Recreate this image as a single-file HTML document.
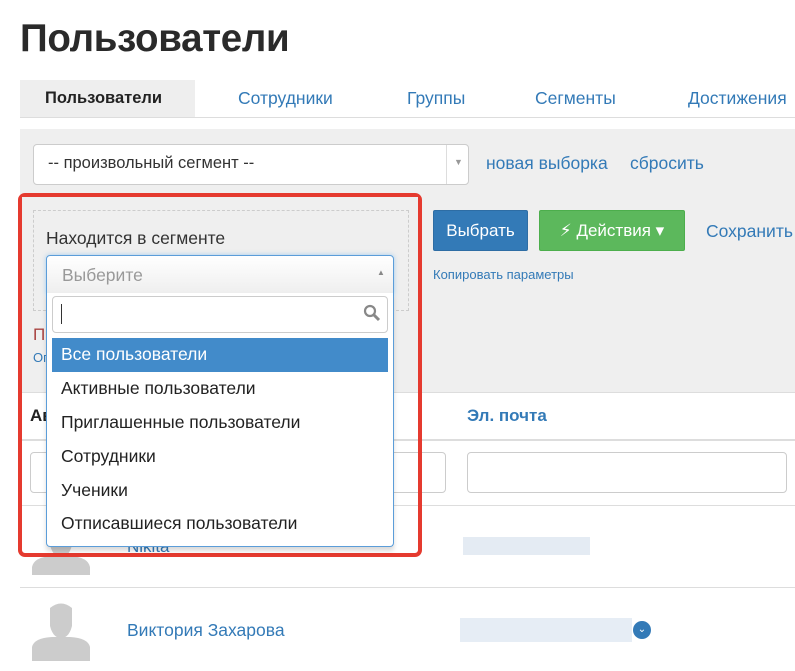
<!DOCTYPE html>
<html><head><meta charset="utf-8"><style>
*{box-sizing:border-box;margin:0;padding:0}
body{width:795px;height:671px;overflow:hidden;background:#fff;font-family:"Liberation Sans","DejaVu Sans",sans-serif;color:#333;position:relative}
.a{position:absolute}
.blue{color:#337ab7}
</style></head><body>
<div class="a" style="left:20px;top:17px;font-size:38.5px;font-weight:bold;color:#2a2a2a;letter-spacing:-0.3px">Пользователи</div>
<div class="a" style="left:20px;top:80px;width:175px;height:38px;background:#eee"></div>
<div class="a" style="left:20px;top:117px;width:775px;height:1px;background:#ddd"></div>
<div class="a" style="left:45px;top:89px;font-size:16.5px;font-weight:bold;color:#222">Пользователи</div>
<div class="a blue" style="left:238px;top:88px;font-size:17.5px">Сотрудники</div>
<div class="a blue" style="left:407px;top:88px;font-size:17.5px">Группы</div>
<div class="a blue" style="left:535px;top:88px;font-size:17.5px">Сегменты</div>
<div class="a blue" style="left:688px;top:88px;font-size:17.5px">Достижения</div>

<div class="a" style="left:20px;top:129px;width:775px;height:263px;background:#efefef"></div>
<div class="a" style="left:33px;top:144px;width:436px;height:41px;background:#fff;border:1px solid #ccc;border-radius:4px"></div>
<div class="a" style="left:446px;top:145px;width:1px;height:39px;background:#ddd"></div>
<div class="a" style="left:454px;top:157px;font-size:9px;color:#999">▼</div>
<div class="a" style="left:48px;top:154px;font-size:16.5px;color:#333">-- произвольный сегмент --</div>
<div class="a blue" style="left:486px;top:153px;font-size:17.5px">новая выборка</div>
<div class="a blue" style="left:630px;top:153px;font-size:17.5px">сбросить</div>

<div class="a" style="left:433px;top:210px;width:95px;height:41px;background:#337ab7;border:1px solid #2e6da4;border-radius:2px;color:#fff;font-size:17px;text-align:center;line-height:40px">Выбрать</div>
<div class="a" style="left:539px;top:210px;width:146px;height:41px;background:#5cb85c;border:1px solid #4cae4c;border-radius:2px;color:#fff;font-size:17px;text-align:center;line-height:40px">⚡ Действия ▾</div>
<div class="a blue" style="left:706px;top:221px;font-size:17.5px">Сохранить</div>
<div class="a blue" style="left:433px;top:267px;font-size:13px">Копировать параметры</div>

<div class="a" style="left:20px;top:392px;width:775px;height:1px;background:#ddd"></div>
<div class="a" style="left:30px;top:406px;font-size:17px;font-weight:bold;color:#222">Ав</div>
<div class="a blue" style="left:467px;top:406px;font-size:17px;font-weight:bold">Эл. почта</div>
<div class="a" style="left:20px;top:439px;width:775px;height:2px;background:#ddd"></div>
<div class="a" style="left:30px;top:452px;width:416px;height:41px;border:1px solid #ccc;border-radius:4px"></div>
<div class="a" style="left:467px;top:452px;width:320px;height:41px;border:1px solid #ccc;border-radius:4px"></div>
<div class="a" style="left:20px;top:505px;width:775px;height:1px;background:#ddd"></div>

<svg class="a" style="left:30px;top:505px" width="62" height="90"><path d="M20 20 q11-6 22 0 v20 q-3 12 -11 12 q-8 0 -11 -12z M2 70 v-8 q2-10 20-11 h18 q18 1 20 11 v8z" fill="#ccc"/></svg>
<div class="a blue" style="left:127px;top:537px;font-size:17px">Nikita</div>
<div class="a" style="left:463px;top:537px;width:127px;height:18px;background:#e4ebf3"></div>
<div class="a" style="left:20px;top:587px;width:775px;height:1px;background:#ddd"></div>
<svg class="a" style="left:30px;top:598px" width="62" height="64"><path d="M20 10 q11-9 22 0 v18 q-3 12 -11 12 q-8 0 -11 -12z M2 63 v-14 q2-9 20-10 h18 q18 1 20 10 v14z" fill="#ccc"/></svg>
<div class="a blue" style="left:127px;top:620px;font-size:17.5px">Виктория Захарова</div>
<div class="a" style="left:460px;top:618px;width:172px;height:24px;background:#e6edf5"></div>
<div class="a" style="left:633px;top:621px;width:18px;height:18px;border-radius:50%;background:#337ab7;color:#fff;font-size:10px;text-align:center;line-height:18px">⌄</div>

<!-- red box -->
<div class="a" style="left:18px;top:193px;width:404px;height:364px;border:4px solid #e53a2f;border-radius:7px"></div>
<div class="a" style="left:22px;top:197px;width:396px;height:195px;background:#efefef"></div>
<div class="a" style="left:33px;top:325px;font-size:17px;color:#a94442">П</div>
<div class="a blue" style="left:33px;top:350px;font-size:13px">Ог</div>
<div class="a" style="left:33px;top:210px;width:376px;height:101px;border:1px dashed #ccc"></div>
<div class="a" style="left:46px;top:228px;font-size:17.5px;color:#333">Находится в сегменте</div>
<div class="a" style="left:46px;top:255px;width:348px;height:40px;border:1px solid #5b9dd9;border-radius:4px 4px 0 0;background:linear-gradient(#fff,#eee);box-shadow:0 0 5px rgba(82,168,236,.5)"></div>
<div class="a" style="left:62px;top:265px;font-size:17.5px;color:#999">Выберите</div>
<div class="a" style="left:377px;top:268px;font-size:8px;color:#888">▲</div>
<div class="a" style="left:46px;top:293px;width:348px;height:254px;background:#fff;border:1px solid #5b9dd9;border-top:none;border-radius:0 0 4px 4px;box-shadow:0 4px 5px rgba(0,0,0,.15)"></div>
<div class="a" style="left:52px;top:296px;width:336px;height:37px;border:1px solid #ccc;border-radius:4px"></div>
<div class="a" style="left:61px;top:304px;width:1px;height:20px;background:#333"></div>
<svg class="a" style="left:363px;top:304px" width="18" height="18"><circle cx="7" cy="7" r="5" fill="none" stroke="#888" stroke-width="2.2"/><path d="M11 11 L16 16" stroke="#888" stroke-width="3"/></svg>
<div class="a" style="left:52px;top:338px;width:336px;height:34px;background:#428bca"></div>
<div class="a" style="left:61px;top:344px;font-size:17.5px;color:#fff">Все пользователи</div>
<div class="a" style="left:61px;top:378px;font-size:17.5px;color:#222">Активные пользователи</div>
<div class="a" style="left:61px;top:412px;font-size:17.5px;color:#222">Приглашенные пользователи</div>
<div class="a" style="left:61px;top:446px;font-size:17.5px;color:#222">Сотрудники</div>
<div class="a" style="left:61px;top:480px;font-size:17.5px;color:#222">Ученики</div>
<div class="a" style="left:61px;top:513px;font-size:17.5px;color:#222">Отписавшиеся пользователи</div>
</body></html>
